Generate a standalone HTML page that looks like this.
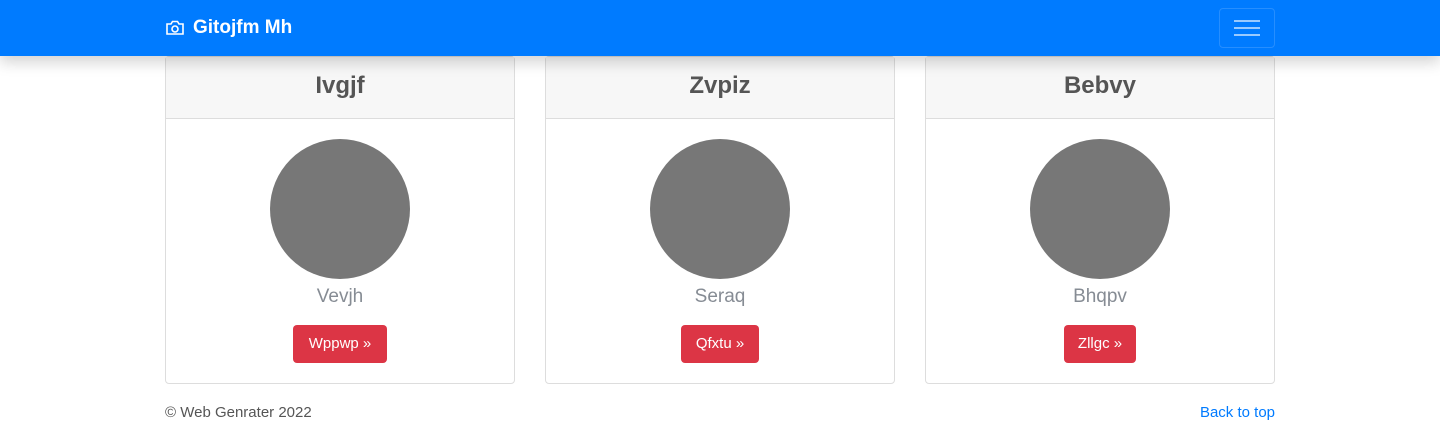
<!DOCTYPE html>
<html><head><style>
body{margin:0;width:1440px;height:424px;background:#fff;font-family:"Liberation Sans",sans-serif;overflow:hidden;position:relative}
.nav{position:absolute;left:0;top:0;width:1440px;height:56px;background:#007bff;box-shadow:0 6px 14px rgba(0,0,0,.18);z-index:2}
.brand{position:absolute;left:165px;top:17px;color:#fff;font-weight:bold;font-size:19px;display:flex;align-items:center;gap:8px}
.tog{position:absolute;left:1219px;top:8px;width:54px;height:38px;border:1px solid rgba(255,255,255,.15);border-radius:4px}
.tog i{position:absolute;left:14px;width:26px;height:2px;background:rgba(255,255,255,.6)}
.card{position:absolute;top:56px;width:348px;height:326px;border:1px solid #ddd;border-radius:4px;background:#fff}
.hd{height:61px;background:#f7f7f7;border-bottom:1px solid #ddd;text-align:center;line-height:58px;font-size:24px;color:#555;font-weight:bold}
.c{position:absolute;left:104px;top:82px;width:140px;height:140px;border-radius:50%;background:#777}
.nm{position:absolute;top:229px;width:100%;text-align:center;font-size:19px;color:#868c94}
.btn{position:absolute;top:268px;height:38px;line-height:38px;background:#dc3545;color:#fff;border-radius:4px;font-size:15px;text-align:center}
.ft{position:absolute;top:404px;font-size:15px}
</style></head><body>
<div class="nav"><div class="brand"><svg width="20" height="18" viewBox="0 0 20 18" fill="none" stroke="#fff" stroke-width="1.6"><path d="M2 5h4l1.5-2.5h5L14 5h4v10H2z"/><circle cx="10" cy="10" r="3"/></svg>Gitojfm Mh</div>
<div class="tog"><i style="top:11px"></i><i style="top:18px"></i><i style="top:25px"></i></div></div>
<div class="card" style="left:165px"><div class="hd">Ivgjf</div><div class="c"></div><div class="nm">Vevjh</div><div class="btn" style="left:127px;width:94px">Wppwp »</div></div>
<div class="card" style="left:545px"><div class="hd">Zvpiz</div><div class="c"></div><div class="nm">Seraq</div><div class="btn" style="left:135px;width:78px">Qfxtu »</div></div>
<div class="card" style="left:925px"><div class="hd">Bebvy</div><div class="c"></div><div class="nm">Bhqpv</div><div class="btn" style="left:138px;width:72px">Zllgc »</div></div>
<div class="ft" style="left:165px;color:#555">© Web Genrater 2022</div>
<div class="ft" style="right:165px;color:#007bff">Back to top</div>
</body></html>
